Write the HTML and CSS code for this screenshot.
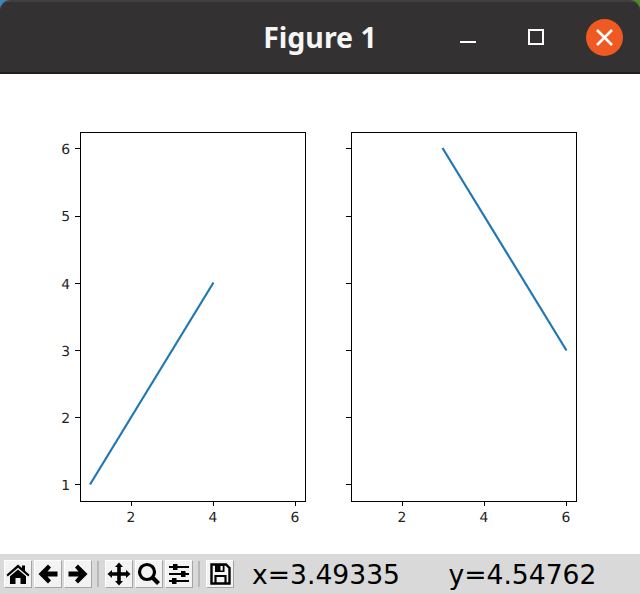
FILE: index.html
```html
<!DOCTYPE html>
<html lang="en">
<head>
    <meta charset="UTF-8">
    <title>Figure 1</title>
    <link rel="stylesheet" href="styles.css">
</head>
<body>
    <div class="window">
        <div class="titlebar">
            <div class="title">Figure 1</div>
            <div class="win-buttons">
                <div class="win-btn"><span class="minimize"></span></div>
                <div class="win-btn"><span class="maximize"></span></div>
                <div class="win-btn">
                    <span class="close">
                        <svg width="37" height="37" viewBox="0 0 37 37"><path d="M11 11 L26 26 M26 11 L11 26" stroke="#fff" stroke-width="2.6" fill="none"/></svg>
                    </span>
                </div>
            </div>
        </div>

        <div class="figure">
            <svg class="plots" width="640" height="480" viewBox="0 74 640 480">
                <!-- left axes -->
                <g class="ticks">
                    <path d="M75 148.500h5M75 216.500h5M75 283.500h5M75 350.500h5M75 417.500h5M75 484.500h5"/>
                    <path d="M131.500 501v5M213.500 501v5M295.500 501v5"/>
                </g>
                <g class="labels">
                    <text x="70" y="153.500" text-anchor="end">6</text>
                    <text x="70" y="221" text-anchor="end">5</text>
                    <text x="70" y="288.500" text-anchor="end">4</text>
                    <text x="70" y="355.500" text-anchor="end">3</text>
                    <text x="70" y="422.500" text-anchor="end">2</text>
                    <text x="70" y="489.500" text-anchor="end">1</text>
                    <text x="131" y="522" text-anchor="middle">2</text>
                    <text x="213" y="522" text-anchor="middle">4</text>
                    <text x="295" y="522" text-anchor="middle">6</text>
                </g>
                <path class="series" d="M90 484.500L213.500 282.500"/>
                <rect class="axes" x="80.500" y="132.500" width="225" height="369"/>

                <!-- right axes -->
                <g class="ticks">
                    <path d="M346 148.500h5M346 216.500h5M346 283.500h5M346 350.500h5M346 417.500h5M346 484.500h5"/>
                    <path d="M402.500 501v5M484.500 501v5M566.500 501v5"/>
                </g>
                <g class="labels">
                    <text x="402" y="522" text-anchor="middle">2</text>
                    <text x="484" y="522" text-anchor="middle">4</text>
                    <text x="566" y="522" text-anchor="middle">6</text>
                </g>
                <path class="series" d="M442.500 148L566.500 350.500"/>
                <rect class="axes" x="351.500" y="132.500" width="225" height="369"/>
            </svg>
        </div>

        <div class="toolbar">
            <div class="tool-btn">
                <svg width="24" height="24" viewBox="0 0 24 24"><path d="M12 2.500L16 6V3.500H19V8.700L23.500 12.800L22.300 14.500L12 5.700L1.700 14.500L.5 12.800Z"/><path d="M12 7.500L20 14.300V22H14.500V16H9.500V22H4V14.300Z"/></svg>
            </div>
            <div class="tool-btn">
                <svg width="24" height="24" viewBox="0 0 24 24"><path d="M2.500 12L12 2.500L15 5.500L11.500 9.500H21.500V14.500H11.500L15 18.500L12 21.500Z"/></svg>
            </div>
            <div class="tool-btn">
                <svg width="24" height="24" viewBox="0 0 24 24"><path d="M21.500 12L12 2.500L9 5.500L12.500 9.500H2.500V14.500H12.500L9 18.500L12 21.500Z"/></svg>
            </div>
            <div class="tool-sep"></div>
            <div class="tool-btn">
                <svg width="24" height="24" viewBox="0 0 24 24"><path d="M12 .5L16 5H13.800V10.200H19V8L23.500 12L19 16V13.800H13.800V19H16L12 23.500L8 19H10.200V13.800H5V16L.5 12L5 8V10.200H10.200V5H8Z"/></svg>
            </div>
            <div class="tool-btn">
                <svg width="24" height="24" viewBox="0 0 24 24"><circle cx="10" cy="10" r="7.500" fill="none" stroke="#000" stroke-width="3.200"/><path d="M15 15L21.500 21.500" stroke="#000" stroke-width="4.200" fill="none"/></svg>
            </div>
            <div class="tool-btn">
                <svg width="24" height="24" viewBox="0 0 24 24"><path d="M2 5h20M2 12h20M2 19h20" stroke="#000" stroke-width="1.800" fill="none"/><rect x="6" y="2" width="4.500" height="6"/><rect x="14" y="9" width="4.500" height="6"/><rect x="5" y="16" width="4.500" height="6"/></svg>
            </div>
            <div class="tool-sep"></div>
            <div class="tool-btn">
                <svg width="24" height="24" viewBox="0 0 24 24"><path d="M3.500 2.500H18L21.500 6V21.500H3.500Z" fill="none" stroke="#000" stroke-width="2.400"/><path d="M7 3H16.500V10H7Z"/><rect x="12.500" y="4" width="2.200" height="4.500" fill="#fff"/><path d="M7.500 21V14H17.500V21" fill="none" stroke="#000" stroke-width="2.200"/></svg>
            </div>
            <div class="coords">
                <span class="coord-x">x=3.49335</span>
                <span>y=4.54762</span>
            </div>
        </div>
    </div>
</body>
</html>
```

FILE: styles.css
```css
body {
    margin: 0;
    background: #fff;
}
.window {
    width: 640px;
    height: 594px;
    display: flex;
    flex-direction: column;
    overflow: hidden;
    background: linear-gradient(to right, #3f86b4 0 50%, #4f8a24 50% 100%);
}
.titlebar {
    height: 70px;
    flex: none;
    display: grid;
    grid-template-columns: 1fr auto 1fr;
    align-items: center;
    background: #333131;
    border-top: 2px solid #403e3e;
    border-bottom: 2px solid #1f1e1e;
    border-radius: 10px 10px 0 0;
}
.title {
    grid-column: 2;
    font-family: "Noto Sans", sans-serif;
    font-weight: 700;
    font-size: 28.5px;
    color: #f6f6f6;
}
.win-buttons {
    grid-column: 3;
    display: flex;
    justify-content: flex-end;
    padding-right: 2px;
}
.win-btn {
    width: 68px;
    height: 37px;
    display: flex;
    align-items: center;
    justify-content: center;
}
.minimize {
    width: 16px;
    height: 2px;
    background: #fff;
    margin-top: 10px;
}
.maximize {
    width: 12px;
    height: 12px;
    border: 2px solid #fff;
}
.close {
    width: 37px;
    height: 37px;
    border-radius: 50%;
    background: #ef5a23;
}
.close svg {
    display: block;
}
.figure {
    flex: 1;
    background: #fff;
}
.plots {
    display: block;
}
.axes {
    fill: none;
    stroke: #000;
    stroke-width: 1;
}
.ticks path {
    stroke: #000;
    stroke-width: 1;
    fill: none;
}
.labels text {
    font-family: "DejaVu Sans", sans-serif;
    font-size: 13.9px;
    text-rendering: geometricPrecision;
    fill: #222;
}
.series {
    stroke: #1f77b4;
    stroke-width: 2.2;
    fill: none;
}
.toolbar {
    height: 40px;
    flex: none;
    box-sizing: border-box;
    padding: 6px 0 6px 4px;
    display: flex;
    align-items: center;
    background: #d9d9d9;
}
.tool-btn {
    width: 28px;
    height: 28px;
    box-sizing: border-box;
    margin-right: 2px;
    display: flex;
    align-items: center;
    justify-content: center;
    background: #f3f3f3;
    border: 1px solid;
    border-color: #fff #a4a4a4 #a4a4a4 #fff;
}
.tool-sep {
    width: 2px;
    height: 26px;
    margin: 0 6px 0 3px;
    background: #b8b8b8;
}
.coords {
    margin-left: 16px;
    font-family: "DejaVu Sans", sans-serif;
    font-size: 26.6px;
    color: #000;
    white-space: nowrap;
}
.coord-x {
    margin-right: 40px;
}
```
